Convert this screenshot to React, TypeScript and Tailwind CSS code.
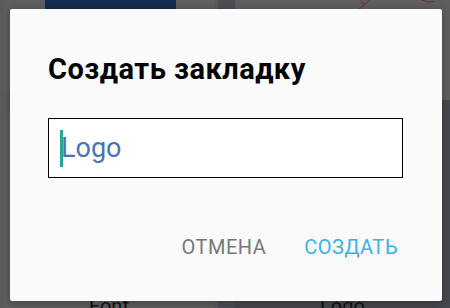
import React from "react";

export default function App() {
  return (
    <div className="relative w-[450px] h-[308px] overflow-hidden bg-[#5a5a5a] font-['Roboto',sans-serif]">
      {/* background app (dimmed) */}
      <div className="flex h-full">
        <div className="w-[218px] flex flex-col">
          <div className="h-[92px] mx-[3px] bg-[#5e5e5e] rounded-b-[4px] relative">
            <div className="absolute left-[42px] top-0 w-[131px] h-[10px] bg-[#122d4f]" />
          </div>
          <div className="flex-1 mx-[3px] mt-[20px] bg-[#5e5e5e] rounded-t-[4px] flex items-end justify-center">
            <span className="text-[20px] text-[#111] leading-none mb-[-8px]">Font</span>
          </div>
        </div>
        <div className="w-[17px] bg-[#4b4e54]" />
        <div className="flex-1 flex flex-col">
          <div className="h-[100px] bg-[#5e5e5e] relative">
            <svg className="absolute left-[60px] top-0" width="140" height="12" viewBox="0 0 140 12">
              <path d="M75 0 L68 6 L63 10 M66 2 L70 4" stroke="#7a2a26" strokeWidth="1" fill="none" />
              <path d="M142 0 Q135 4 127 0" stroke="#7a2a26" strokeWidth="1" fill="none" />
            </svg>
          </div>
          <div className="flex-1 bg-[#45484e] flex items-end justify-center">
            <span className="text-[20px] text-[#111] leading-none mb-[-8px]">Logo</span>
          </div>
        </div>
      </div>
      {/* dialog */}
      <div className="absolute left-[10px] top-[9px] w-[432px] h-[292px] bg-[#fafafa] rounded-[2px] shadow-[0_2px_8px_rgba(0,0,0,0.3)] flex flex-col">
        <div className="pl-[38px] pt-[44px] text-[29px] tracking-[0.5px] font-bold text-black leading-[32px] whitespace-nowrap">
          Создать закладку
        </div>
        <div className="ml-[38px] mt-[33px] w-[355px] h-[60px] border border-black bg-white flex items-center pl-[11px]">
          <div className="w-[3px] h-[37px] bg-[#26a69a]" />
          <span className="text-[27px] text-[#4a72b5] leading-none ml-[-2px]">Logo</span>
        </div>
        <div className="flex justify-end items-center gap-[38px] pr-[44px] mt-[58px] text-[20px] tracking-[0.5px] leading-[22px]">
          <span className="text-[#787878]">ОТМЕНА</span>
          <span className="text-[#39b3e6]">СОЗДАТЬ</span>
        </div>
      </div>
    </div>
  );
}
